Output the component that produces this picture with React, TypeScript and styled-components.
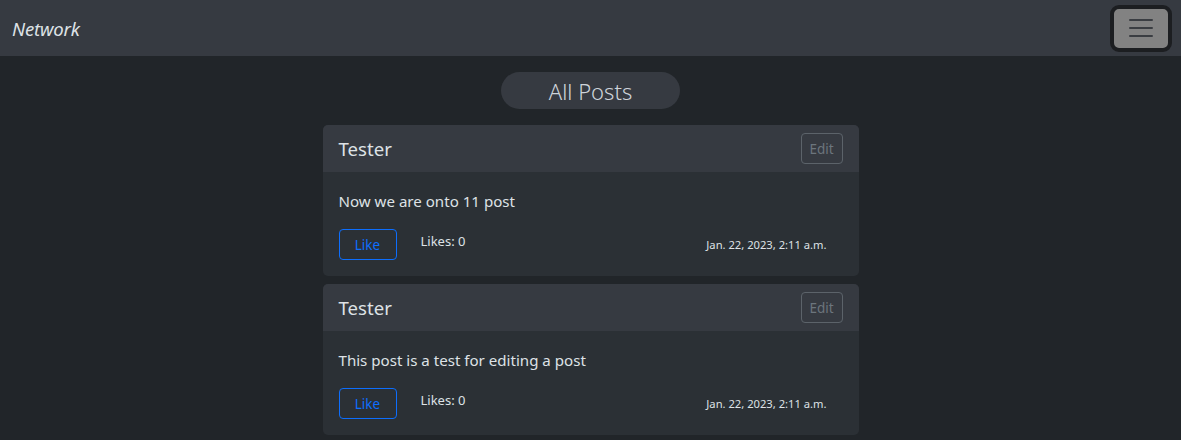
import React from "react";
import styled, { createGlobalStyle } from "styled-components";

const Global = createGlobalStyle`
  html, body { margin: 0; padding: 0; }
  body {
    background: #212529;
    color: #dee2e6;
    font-family: "Noto Sans", "Open Sans", sans-serif;
    height: 440px;
    overflow: hidden;
  }
`;

const Nav = styled.nav`
  height: 56px;
  background: #363a41;
  display: flex;
  align-items: center;
  justify-content: space-between;
  padding: 0 9px 0 12px;
  box-sizing: border-box;
`;

const Brand = styled.span`
  font-style: italic;
  font-size: 18.6px;
  color: #dee2e6;
  letter-spacing: -0.2px;
`;

const Toggler = styled.button`
  width: 62px;
  height: 47px;
  box-sizing: border-box;
  background: #828282;
  border: 4px solid #1c1e21;
  border-radius: 9px;
  display: flex;
  align-items: center;
  justify-content: center;
  padding: 0;
`;

const Main = styled.main`
  display: flex;
  flex-direction: column;
  align-items: center;
  padding-top: 16px;
`;

const Pill = styled.h1`
  margin: 0 0 16px;
  width: 179px;
  height: 37px;
  border-radius: 19px;
  background: #363a41;
  color: #ced4da;
  font-weight: 300;
  font-size: 22px;
  display: flex;
  align-items: center;
  justify-content: center;
`;

const List = styled.div`
  width: 536px;
  display: flex;
  flex-direction: column;
  gap: 8px;
`;

const Card = styled.article`
  border-radius: 5px;
  overflow: hidden;
  background: #2b3035;
`;

const CardHeader = styled.header`
  background: #363a41;
  height: 47px;
  box-sizing: border-box;
  padding: 0 16px;
  display: flex;
  align-items: center;
  justify-content: space-between;
`;

const Author = styled.h5`
  margin: 0;
  font-size: 18.6px;
  font-weight: 400;
  color: #dee2e6;
`;

const EditButton = styled.button`
  height: 31px;
  width: 42px;
  box-sizing: border-box;
  border: 1px solid #5c636a;
  border-radius: 4px;
  background: transparent;
  color: #6c757d;
  font-family: inherit;
  font-size: 13.5px;
  padding: 0;
`;

const CardBody = styled.div`
  padding: 16px;
`;

const Content = styled.p`
  margin: 1px 0 16px;
  font-size: 15.1px;
  line-height: 24px;
  color: #dee2e6;
`;

const Footer = styled.div`
  display: flex;
  align-items: flex-start;
`;

const LikeButton = styled.button`
  width: 58px;
  height: 31px;
  box-sizing: border-box;
  border: 1px solid #0d6efd;
  border-radius: 4px;
  background: transparent;
  color: #0d6efd;
  font-family: inherit;
  font-size: 13.5px;
  padding: 0;
`;

const Likes = styled.span`
  margin-left: 24px;
  font-size: 13px;
  line-height: 24px;
  color: #dee2e6;
`;

const Date = styled.span`
  margin-left: auto;
  margin-right: 16px;
  margin-top: 6px;
  font-size: 11.2px;
  line-height: 20px;
  color: #dee2e6;
`;

const posts = [
  { author: "Tester", text: "Now we are onto 11 post", likes: 0, date: "Jan. 22, 2023, 2:11 a.m." },
  { author: "Tester", text: "This post is a test for editing a post", likes: 0, date: "Jan. 22, 2023, 2:11 a.m." },
];

export default function App() {
  return (
    <>
      <Global />
      <Nav>
        <Brand>Network</Brand>
        <Toggler aria-label="Toggle navigation">
          <svg width="30" height="30" viewBox="0 0 30 30">
            <path d="M4 7h22M4 15h22M4 23h22" stroke="#3a3d42" strokeWidth="2" strokeLinecap="round" />
          </svg>
        </Toggler>
      </Nav>
      <Main>
        <Pill>All Posts</Pill>
        <List>
          {posts.map((p, i) => (
            <Card key={i}>
              <CardHeader>
                <Author>{p.author}</Author>
                <EditButton>Edit</EditButton>
              </CardHeader>
              <CardBody>
                <Content>{p.text}</Content>
                <Footer>
                  <LikeButton>Like</LikeButton>
                  <Likes>Likes: {p.likes}</Likes>
                  <Date>{p.date}</Date>
                </Footer>
              </CardBody>
            </Card>
          ))}
        </List>
      </Main>
    </>
  );
}
